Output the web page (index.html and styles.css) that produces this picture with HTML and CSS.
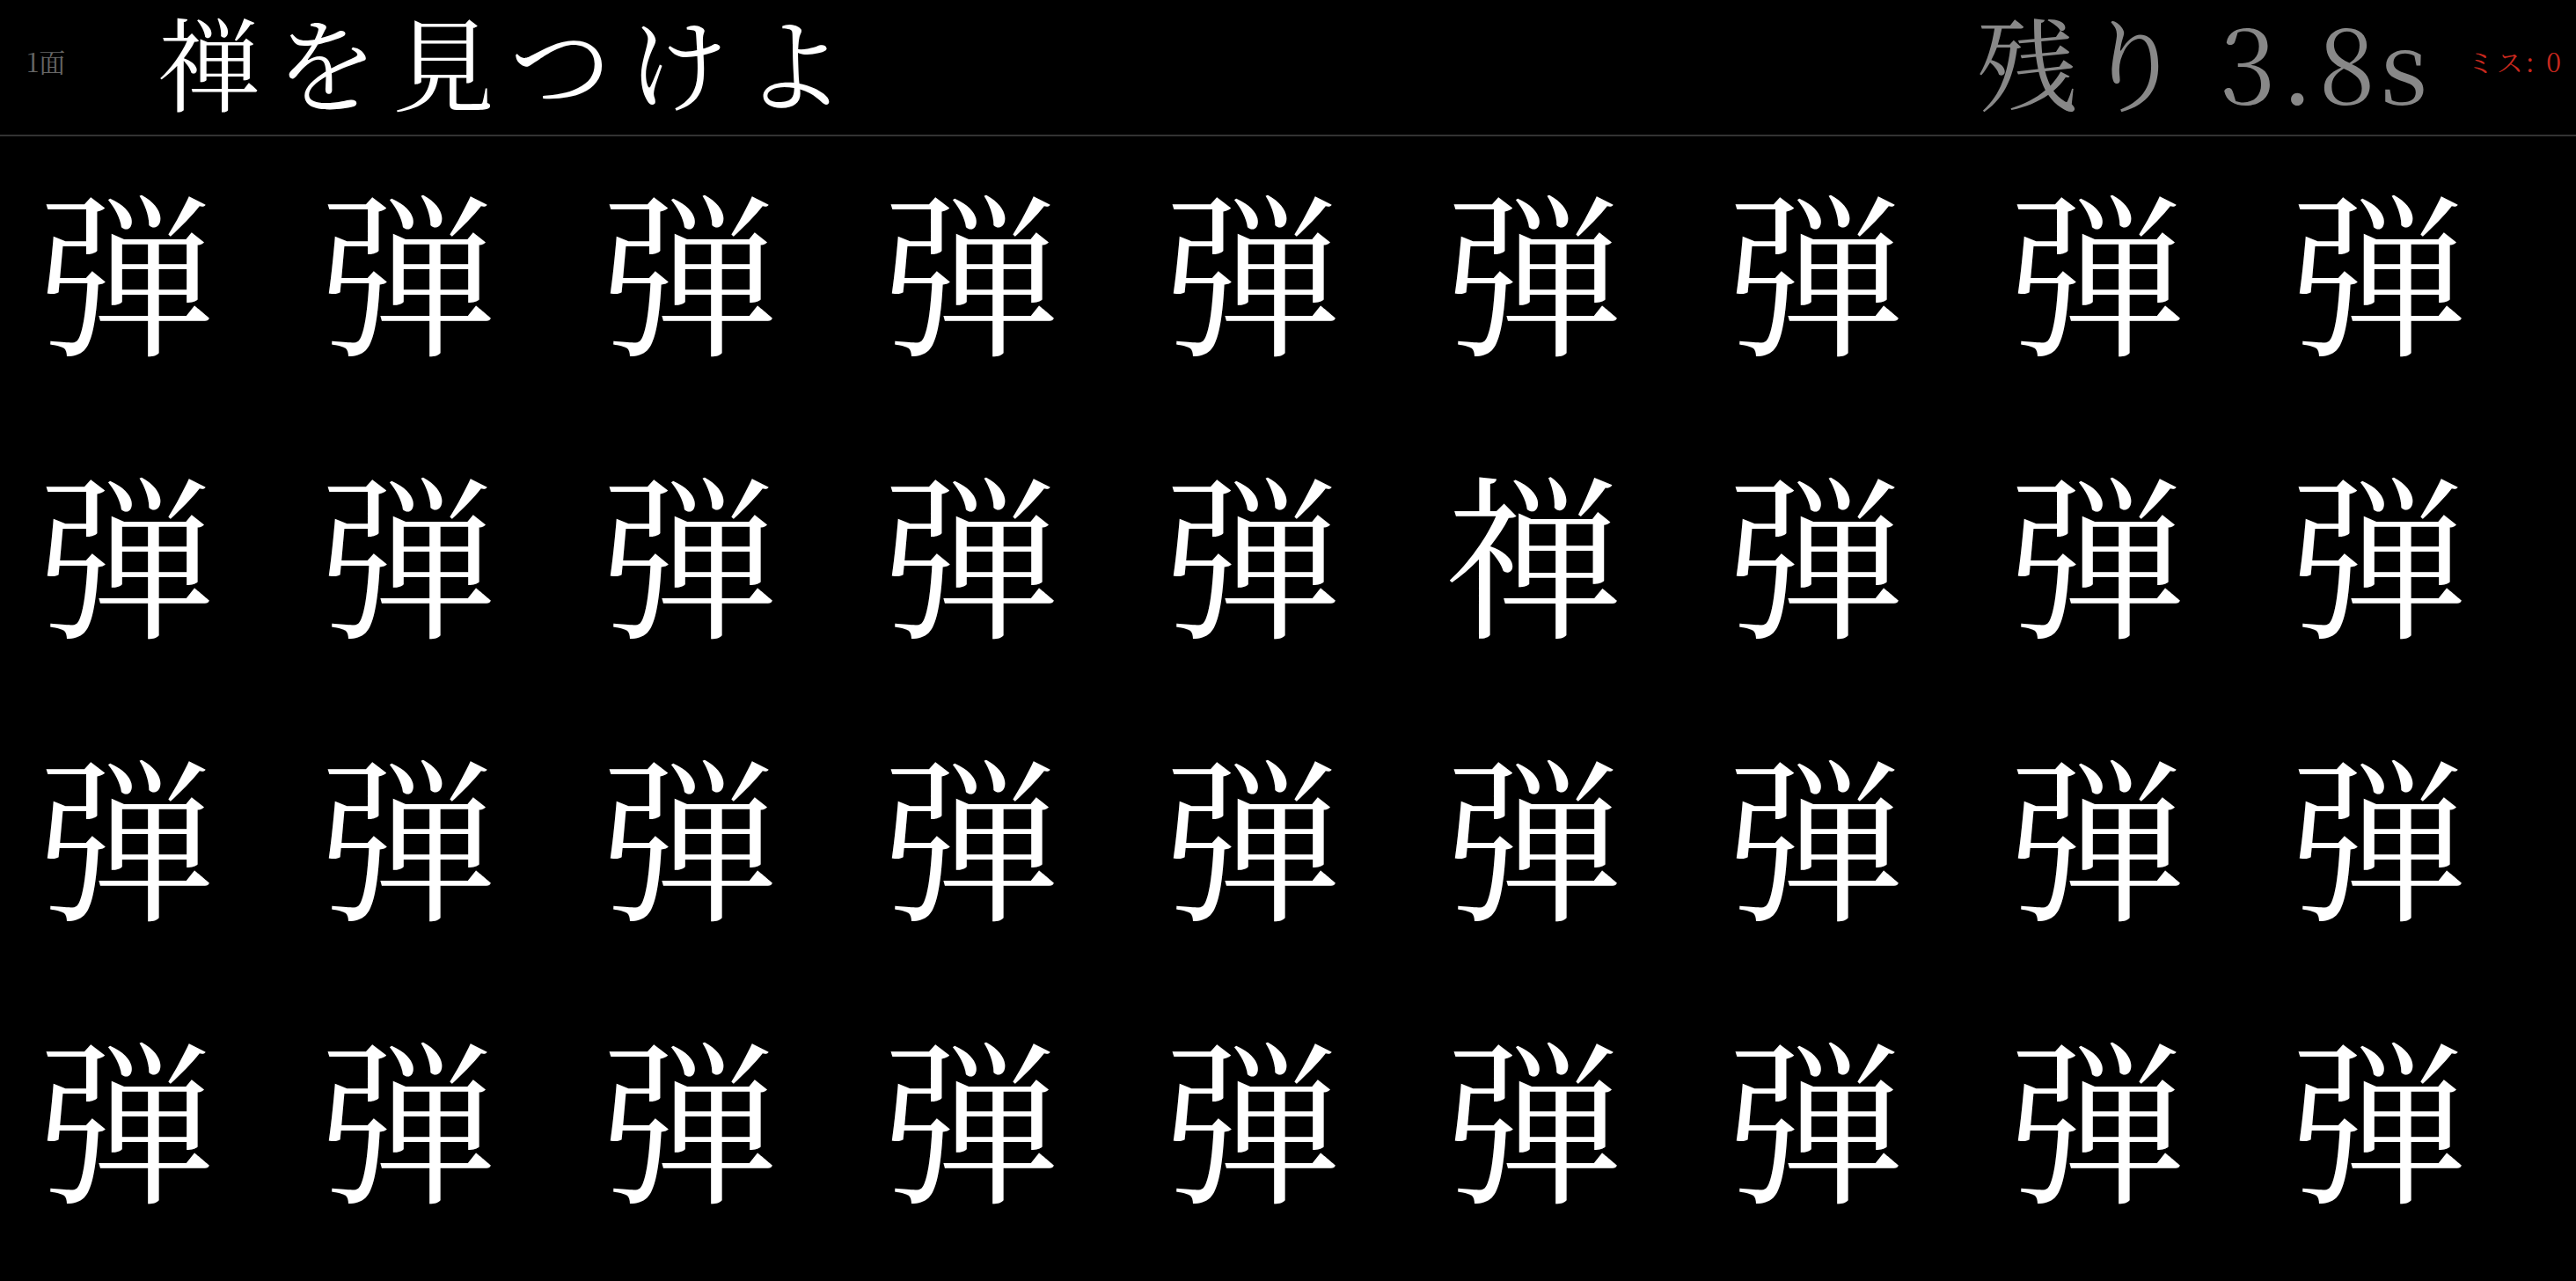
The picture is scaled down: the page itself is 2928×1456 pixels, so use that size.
FILE: index.html
```html
<!DOCTYPE html>
<html lang="ja">
<head>
<meta charset="utf-8">
<title>禅を見つけよ</title>
<link rel="stylesheet" href="styles.css">
</head>
<body>
<header class="top">
  <div class="left">
    <span class="stage">1面</span>
    <h1 class="prompt">禅を見つけよ</h1>
  </div>
  <div class="right">
    <span class="timer">残り 3.8s</span>
    <span class="miss">ミス: 0</span>
  </div>
</header>
<main class="grid">
  <div class="cell">弾</div><div class="cell">弾</div><div class="cell">弾</div><div class="cell">弾</div><div class="cell">弾</div><div class="cell">弾</div><div class="cell">弾</div><div class="cell">弾</div><div class="cell">弾</div>
  <div class="cell">弾</div><div class="cell">弾</div><div class="cell">弾</div><div class="cell">弾</div><div class="cell">弾</div><div class="cell">禅</div><div class="cell">弾</div><div class="cell">弾</div><div class="cell">弾</div>
  <div class="cell">弾</div><div class="cell">弾</div><div class="cell">弾</div><div class="cell">弾</div><div class="cell">弾</div><div class="cell">弾</div><div class="cell">弾</div><div class="cell">弾</div><div class="cell">弾</div>
  <div class="cell">弾</div><div class="cell">弾</div><div class="cell">弾</div><div class="cell">弾</div><div class="cell">弾</div><div class="cell">弾</div><div class="cell">弾</div><div class="cell">弾</div><div class="cell">弾</div>
</main>
</body>
</html>
```
FILE: styles.css
```css
html, body {
  margin: 0;
  padding: 0;
  background: #000;
  height: 100%;
  overflow: hidden;
}
body {
  font-family: "Noto Serif CJK JP", "Noto Serif CJK SC", serif;
  color: #fff;
}
.top {
  display: flex;
  justify-content: space-between;
  align-items: center;
  height: 137px;
  padding: 0 14px 16px 30px;
  border-bottom: 2px solid #333;
}
.left, .right {
  display: flex;
  align-items: center;
}
.stage {
  font-size: 30px;
  color: #666;
  width: 150px;
}
.prompt {
  margin: 0;
  font-weight: normal;
  font-size: 116px;
  letter-spacing: 17px;
  line-height: 1.3;
  color: #fff;
}
.timer {
  font-size: 116px;
  line-height: 1.3;
  color: #888;
  letter-spacing: 5px;
}
.miss {
  font-size: 30px;
  color: #c8281e;
  letter-spacing: 3px;
  margin-left: 40px;
}
.grid {
  display: grid;
  grid-template-columns: repeat(9, 320px);
  grid-auto-rows: 321px;
  padding: 48px 0 0 44px;
}
.cell {
  font-size: 200px;
  line-height: 1;
}
```
